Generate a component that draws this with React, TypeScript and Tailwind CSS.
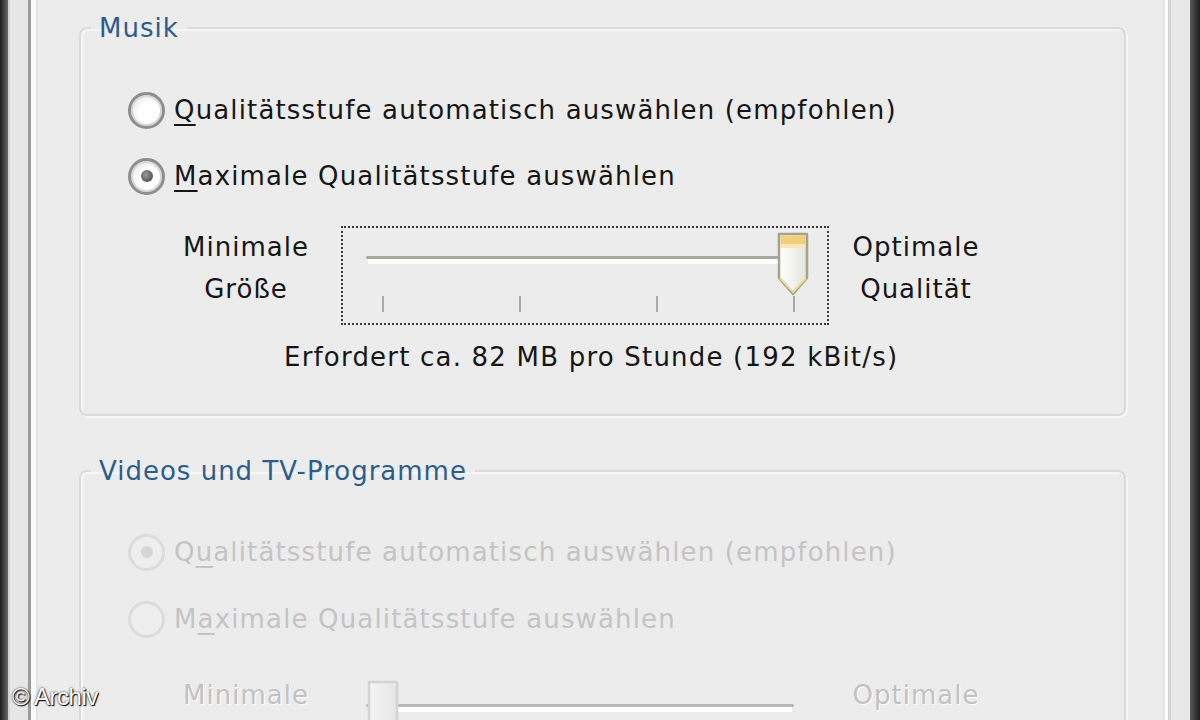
import React from 'react';

const font = { fontFamily: '"DejaVu Sans", Verdana, sans-serif' };

interface RadioProps {
  checked?: boolean;
  disabled?: boolean;
  children: React.ReactNode;
}

const Radio: React.FC<RadioProps> = ({ checked, disabled, children }) => (
  <div className="flex items-center h-[40px]">
    <div
      className={`w-[37px] h-[37px] rounded-full flex items-center justify-center border-[3px] ${
        disabled
          ? 'border-[#dcdcdc] bg-[#eeeeee]'
          : 'border-[#8e8e8e] bg-[radial-gradient(circle_at_60%_60%,#ffffff_40%,#dcdcd6_100%)] shadow-[inset_0_0_0_2px_#d8d8d8]'
      }`}
    >
      {checked && (
        <div
          className={`w-[12px] h-[12px] rounded-full ${
            disabled ? 'bg-[#d6d6d6]' : 'bg-[radial-gradient(circle_at_40%_40%,#9a9a9a,#3e3e3e)]'
          }`}
        />
      )}
    </div>
    <span
      className={`ml-[9px] text-[26px] leading-[40px] tracking-[1.15px] ${
        disabled ? 'text-[#c4c4c4]' : 'text-[#161616]'
      }`}
    >
      {children}
    </span>
  </div>
);

const Thumb: React.FC<{ disabled?: boolean }> = ({ disabled }) => (
  <svg width="36" height="68" viewBox="0 0 36 68">
    <defs>
      <linearGradient id={disabled ? 'tbd' : 'tb'} x1="0" x2="1" y1="0" y2="0">
        <stop offset="0" stopColor={disabled ? '#f4f4f4' : '#ffffff'} />
        <stop offset="1" stopColor={disabled ? '#e6e6e6' : '#e4e4dc'} />
      </linearGradient>
    </defs>
    <path
      d="M4 3 H32 V47 L18 63 L4 47 Z"
      fill={`url(#${disabled ? 'tbd' : 'tb'})`}
      stroke={disabled ? '#d4d4d4' : '#a6a18c'}
      strokeWidth="2.5"
      strokeLinejoin="round"
    />
    {!disabled && (
      <>
        <rect x="5.5" y="4.5" width="25" height="9" fill="#f2cf7c" />
        <rect x="5.5" y="13" width="25" height="4" fill="#f9e6b8" />
        <path d="M5 47 L18 61 L31 47" fill="none" stroke="#f0d79a" strokeWidth="2" />
      </>
    )}
  </svg>
);

const Slider: React.FC<{ focused?: boolean; disabled?: boolean }> = ({ focused, disabled }) => (
  <div
    className={`relative w-[488px] h-[99px] border-2 border-dotted ${
      focused ? 'border-[#3a3a3a]' : 'border-transparent'
    }`}
  >
    <svg className="absolute inset-0" width="484" height="95" viewBox="0 0 484 95">
      <rect x="23" y="28" width="428" height="3" rx="1.5" fill={disabled ? '#b8b8b8' : '#a9a89e'} />
      <rect x="25" y="31" width="424" height="5" fill="#ffffff" />
      {!disabled &&
        [39, 176, 313, 450].map((x) => (
          <rect key={x} x={x} y="68" width="2" height="16" fill="#a8a8a8" />
        ))}
    </svg>
    <div className={`absolute top-[3px] ${disabled ? 'left-[22px]' : 'left-[432px]'}`}>
      <Thumb disabled={disabled} />
    </div>
  </div>
);

const SliderRow: React.FC<{ disabled?: boolean; focused?: boolean }> = ({ disabled, focused }) => {
  const label = disabled
    ? 'text-[#c2c2c2] [text-shadow:1px_1px_0_#ffffff]'
    : 'text-[#161616]';
  return (
    <div className="flex items-start ml-[85px]">
      <div className={`w-[160px] text-center text-[26px] leading-[42px] tracking-[1px] ${label}`}>
        <div>Minimale</div>
        <div>Größe</div>
      </div>
      <div className="ml-[15px]">
        <Slider focused={focused} disabled={disabled} />
      </div>
      <div className={`ml-[12px] w-[150px] text-center text-[26px] leading-[42px] tracking-[1px] ${label}`}>
        <div>Optimale</div>
        <div>Qualität</div>
      </div>
    </div>
  );
};

const GroupBox: React.FC<{ title: string; className?: string; children: React.ReactNode }> = ({
  title,
  className,
  children,
}) => (
  <fieldset
    className={`border-2 border-[#dadada] rounded-[8px] shadow-[inset_2px_2px_0_#f6f6f6,2px_2px_0_#f6f6f6] px-0 ${className ?? ''}`}
  >
    <legend className="ml-[10px] px-[8px] text-[26px] leading-[30px] tracking-[1px] text-[#2d5d8c]">
      {title}
    </legend>
    {children}
  </fieldset>
);

export default function App() {
  return (
    <div className="relative w-[1200px] h-[720px] overflow-hidden flex bg-[#ececec]" style={font}>
      {/* left window frame */}
      <div className="w-[8px] h-full bg-gradient-to-r from-[#1c1c1c] to-[#6a6a6a]" />
      <div className="w-[20px] h-full bg-[#e6e6e6] border-l-2 border-[#d2d2d2]" />
      <div className="w-[3px] h-full bg-[#9c9c9c]" />
      <div className="w-[5px] h-full bg-[#fafafa]" />
      <div className="w-[2px] h-full bg-[#e2e2e2]" />

      {/* content */}
      <div className="flex-1 pl-[41px] pr-[37px] pt-[13px]">
        <GroupBox title="Musik" className="h-[403px]">
          <div className="pl-[47px] pt-[47px]">
            <Radio>
              <span className="underline underline-offset-[5px]">Q</span>ualitätsstufe automatisch auswählen (empfohlen)
            </Radio>
            <div className="mt-[26px]">
              <Radio checked>
                <span className="underline underline-offset-[5px]">M</span>aximale Qualitätsstufe auswählen
              </Radio>
            </div>
          </div>
          <div className="mt-[30px]">
            <SliderRow focused />
          </div>
          <div className="mt-[14px] pl-[203px] text-[26px] leading-[36px] tracking-[1.2px] text-[#161616]">
            Erfordert ca. 82 MB pro Stunde (192 kBit/s)
          </div>
        </GroupBox>

        <GroupBox title="Videos und TV-Programme" className="mt-[40px] h-[400px]">
          <div className="pl-[47px] pt-[46px]">
            <Radio checked disabled>
              Q<span className="underline underline-offset-[5px]">u</span>alitätsstufe automatisch auswählen (empfohlen)
            </Radio>
            <div className="mt-[27px]">
              <Radio disabled>
                M<span className="underline underline-offset-[5px]">a</span>ximale Qualitätsstufe auswählen
              </Radio>
            </div>
          </div>
          <div className="mt-[35px]">
            <SliderRow disabled />
          </div>
        </GroupBox>
      </div>

      {/* right window frame */}
      <div className="w-[2px] h-full bg-[#e4e4e4]" />
      <div className="w-[3px] h-full bg-[#ffffff]" />
      <div className="w-[3px] h-full bg-[#d6d6d6]" />
      <div className="w-[19px] h-full bg-[#e8e8e8]" />
      <div className="w-[10px] h-full bg-gradient-to-r from-[#5a5a5a] to-[#1e1e1e]" />

      <div
        className="absolute left-[12px] bottom-[9px] text-[24px] leading-[28px] text-white tracking-[-0.5px] [text-shadow:0_0_2px_#000,1px_1px_1px_#000]"
        style={{ fontFamily: '"Liberation Sans", Arial, sans-serif' }}
      >
        © Archiv
      </div>
    </div>
  );
}
